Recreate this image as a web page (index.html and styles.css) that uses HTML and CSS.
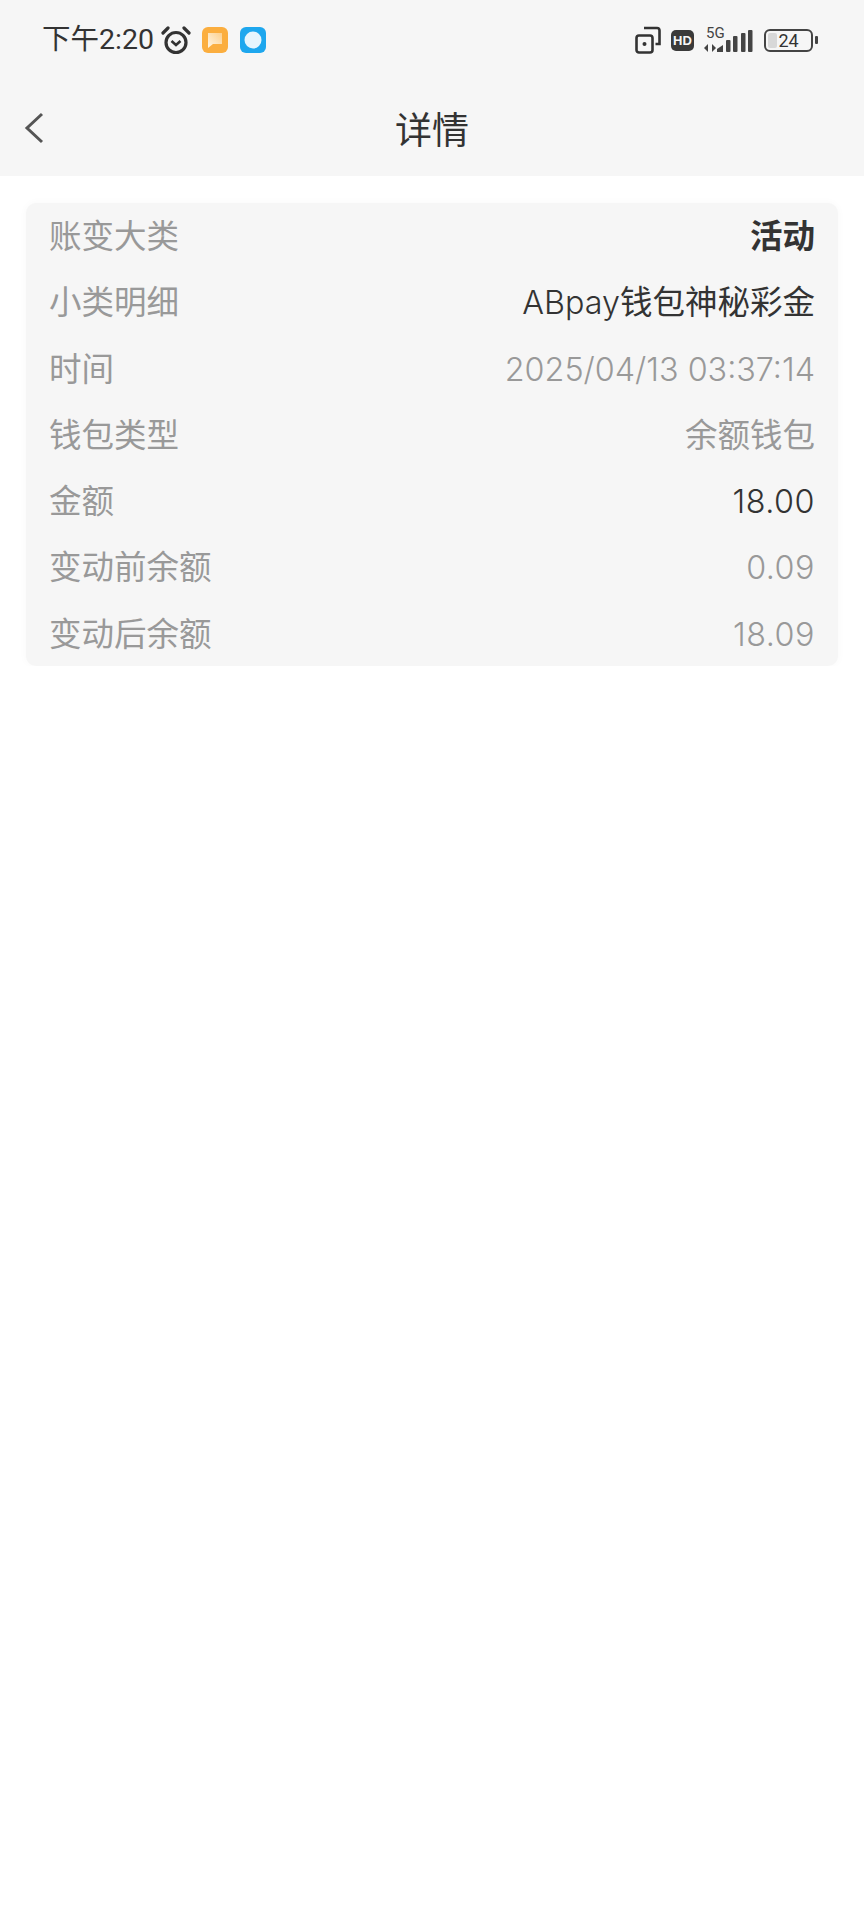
FILE: index.html
```html
<!DOCTYPE html>
<html lang="zh-CN">
<head>
    <meta charset="UTF-8">
    <meta name="viewport" content="width=device-width, initial-scale=1.0">
    <title>详情</title>
    <link rel="stylesheet" href="styles.css">
</head>
<body>
    <header class="top">
        <div class="status-bar">
            <div class="status-left">
                <span class="clock">下午2:20</span>
                <svg class="alarm" width="30" height="29" viewBox="0 0 30 29" fill="none" stroke="#333" stroke-width="3.2">
                    <circle cx="15" cy="16.5" r="10"/>
                    <path d="M2 7l5-5M28 7l-5-5" stroke-linecap="round"/>
                    <path d="M10.5 15l4.5 4 4.5-4" stroke-width="2.6"/>
                </svg>
                <svg class="app-icon" width="26" height="26" viewBox="0 0 26 26">
                    <defs>
                        <linearGradient id="bubble" x1="0" y1="1" x2="1" y2="0">
                            <stop offset="0" stop-color="#fff6e6"/>
                            <stop offset="1" stop-color="#fcd08e"/>
                        </linearGradient>
                    </defs>
                    <rect width="26" height="26" rx="6" fill="#fbae3f"/>
                    <path d="M6 6h14v11h-9l-5 4z" fill="url(#bubble)"/>
                </svg>
                <svg class="app-icon" width="26" height="26" viewBox="0 0 26 26">
                    <rect width="26" height="26" rx="6" fill="#1ea7ee"/>
                    <circle cx="13" cy="13" r="8.5" fill="#e6f5fd"/>
                </svg>
            </div>
            <div class="status-right">
                <svg width="26" height="28" viewBox="0 0 26 28" fill="none" stroke="#333" stroke-width="2.6">
                    <rect x="1.5" y="9.5" width="16" height="17" rx="2.5"/>
                    <path d="M9 2h13a2.5 2.5 0 0 1 2.5 2.5V18h-4"/>
                    <circle cx="9.5" cy="18" r="2" fill="#333" stroke="none"/>
                </svg>
                <span class="hd">HD</span>
                <div class="signal">
                    <span class="net">5G</span>
                    <svg width="49" height="22" viewBox="0 0 49 22" fill="#444">
                        <path d="M0 18l4-4v8zM8 14l4 4-4 4zM13 22v-3l6-4v7z"/>
                        <rect x="22" y="10" width="4.5" height="12" rx="1"/>
                        <rect x="29" y="6" width="4.5" height="16" rx="1"/>
                        <rect x="37" y="3" width="4.5" height="19" rx="1"/>
                        <rect x="44" y="0" width="4.5" height="22" rx="1"/>
                    </svg>
                </div>
                <div class="battery">
                    <div class="battery-body">
                        <span class="battery-level"></span>
                        <span class="battery-text">24</span>
                    </div>
                    <span class="battery-tip"></span>
                </div>
            </div>
        </div>
        <div class="title-bar">
            <svg class="back" width="20" height="32" viewBox="0 0 20 32" fill="none" stroke="#555" stroke-width="3">
                <path d="M18 2L3 16l15 14"/>
            </svg>
            <h1 class="title">详情</h1>
        </div>
    </header>

    <section class="card">
        <div class="row"><span class="label">账变大类</span><span class="value strong">活动</span></div>
        <div class="row"><span class="label">小类明细</span><span class="value dark"><span class="num">ABpay</span>钱包神秘彩金</span></div>
        <div class="row"><span class="label">时间</span><span class="value num">2025/04/13 03:37:14</span></div>
        <div class="row"><span class="label">钱包类型</span><span class="value">余额钱包</span></div>
        <div class="row"><span class="label">金额</span><span class="value dark num amount">18.00</span></div>
        <div class="row"><span class="label">变动前余额</span><span class="value num amount">0.09</span></div>
        <div class="row"><span class="label">变动后余额</span><span class="value num amount">18.09</span></div>
    </section>
</body>
</html>
```

FILE: styles.css
```css
* {
    box-sizing: border-box;
}

body {
    margin: 0;
    background-color: #fff;
    font-family: "Noto Sans CJK SC", "Noto Sans", sans-serif;
}

.top {
    height: 176px;
    background-color: #f6f6f6;
}

.status-bar {
    height: 80px;
    padding: 0 46px 0 42px;
    display: flex;
    align-items: center;
    justify-content: space-between;
}

.status-left,
.status-right {
    display: flex;
    align-items: center;
}

.clock {
    font-family: Roboto, "Noto Sans CJK SC", sans-serif;
    font-size: 28.5px;
    line-height: 36px;
    color: #333;
}

.alarm {
    margin-left: 7px;
}

.app-icon {
    margin-left: 12px;
}

.alarm + .app-icon {
    margin-left: 11px;
}

.hd {
    margin-left: 10px;
    width: 23px;
    height: 21px;
    border-radius: 5px;
    background-color: #3a3a3a;
    color: #f6f6f6;
    font-family: "Liberation Sans", sans-serif;
    font-size: 13px;
    font-weight: 700;
    line-height: 21px;
    text-align: center;
}

.signal {
    margin-left: 10px;
    width: 49px;
    height: 24px;
    position: relative;
}

.signal svg {
    position: absolute;
    left: 0;
    bottom: 0;
}

.net {
    position: absolute;
    left: 2px;
    top: -3px;
    font-family: Roboto, sans-serif;
    font-size: 15px;
    line-height: 16px;
    color: #444;
}

.battery {
    margin-left: 11px;
    display: flex;
    align-items: center;
}

.battery-body {
    width: 49px;
    height: 23px;
    border: 2px solid #444;
    border-radius: 6px;
    position: relative;
    display: flex;
    align-items: center;
    justify-content: center;
}

.battery-level {
    position: absolute;
    left: 2px;
    top: 2px;
    bottom: 2px;
    width: 9px;
    border-radius: 2px;
    background-color: #d8d8d8;
}

.battery-text {
    position: relative;
    font-family: Roboto, sans-serif;
    font-size: 18px;
    line-height: 19px;
    color: #333;
}

.battery-tip {
    margin-left: 2px;
    width: 3px;
    height: 8px;
    border-radius: 1px;
    background-color: #444;
}

.title-bar {
    height: 96px;
    padding: 0 24px;
    display: grid;
    grid-template-columns: 1fr auto 1fr;
    align-items: center;
}

.title {
    grid-column: 2;
    margin: 0;
    font-size: 37px;
    font-weight: 400;
    line-height: 52px;
    color: #333;
}

.card {
    margin: 27px 26px 0 26px;
    padding: 0 23px;
    height: 463px;
    background-color: #f6f6f6;
    border-radius: 10px;
    box-shadow: 0 0 8px rgba(0, 0, 0, 0.03);
}

.row {
    height: 66.3px;
    padding-top: 9px;
    display: flex;
    align-items: baseline;
    justify-content: space-between;
    font-size: 32.5px;
    line-height: 44px;
}

.label,
.value {
    color: #999;
}

.num {
    font-family: Inter, "Noto Sans CJK SC", sans-serif;
    font-size: 32.3px;
    font-weight: 300;
}

.amount {
    letter-spacing: 0.5px;
}

.value.dark {
    color: #333;
}

.value.strong {
    color: #333;
    font-weight: 700;
}
```
